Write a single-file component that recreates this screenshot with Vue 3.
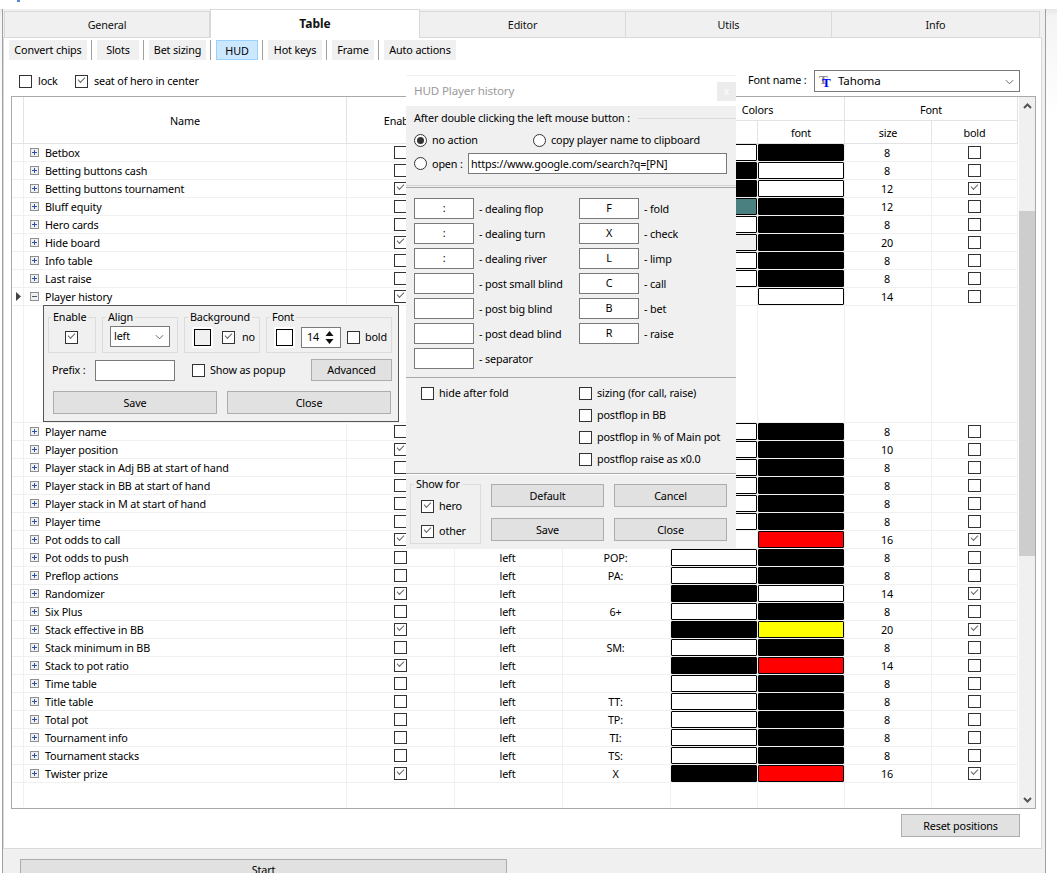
<script setup>
import { ref } from 'vue'

const tabs = [
  { name: 'General', w: 206 },
  { name: 'Table', w: 210, active: true },
  { name: 'Editor', w: 206 },
  { name: 'Utils', w: 206 },
  { name: 'Info', w: 208 }
]

const subTabs = [
  { name: 'Convert chips', w: 78 },
  { name: 'Slots', w: 42 },
  { name: 'Bet sizing', w: 57 },
  { name: 'HUD', w: 42, active: true },
  { name: 'Hot keys', w: 54 },
  { name: 'Frame', w: 42 },
  { name: 'Auto actions', w: 72 }
]

const W = '#ffffff'
const K = '#000000'
const R = '#ff0000'

// name, enable, prefix, background, font color, size, bold
const rows = ref([
  ['Betbox', 0, '', W, K, 8, 0],
  ['Betting buttons cash', 0, '', K, W, 8, 0],
  ['Betting buttons tournament', 1, '', K, W, 12, 1],
  ['Bluff equity', 0, '', '#4a8080', K, 12, 0],
  ['Hero cards', 0, '', W, K, 8, 0],
  ['Hide board', 1, '', '#f0f0f0', K, 20, 0],
  ['Info table', 0, '', W, K, 8, 0],
  ['Last raise', 0, '', W, K, 8, 0],
  ['Player history', 1, '', null, W, 14, 0],
  ['Player name', 0, '', W, K, 8, 0],
  ['Player position', 1, '', W, K, 10, 0],
  ['Player stack in Adj BB at start of hand', 0, '', W, K, 8, 0],
  ['Player stack in BB at start of hand', 0, '', W, K, 8, 0],
  ['Player stack in M at start of hand', 0, '', W, K, 8, 0],
  ['Player time', 0, '', W, K, 8, 0],
  ['Pot odds to call', 1, '', null, R, 16, 1],
  ['Pot odds to push', 0, 'POP:', W, K, 8, 0],
  ['Preflop actions', 0, 'PA:', W, K, 8, 0],
  ['Randomizer', 1, '', K, W, 14, 1],
  ['Six Plus', 0, '6+', W, K, 8, 0],
  ['Stack effective in BB', 1, '', K, '#ffff00', 20, 1],
  ['Stack minimum in BB', 0, 'SM:', W, K, 8, 0],
  ['Stack to pot ratio', 1, '', K, R, 14, 0],
  ['Time table', 0, '', W, K, 8, 0],
  ['Title table', 0, 'TT:', W, K, 8, 0],
  ['Total pot', 0, 'TP:', W, K, 8, 0],
  ['Tournament info', 0, 'TI:', W, K, 8, 0],
  ['Tournament stacks', 0, 'TS:', W, K, 8, 0],
  ['Twister prize', 1, 'X', K, R, 16, 1]
].map(r => ({ name: r[0], on: r[1], prefix: r[2], bg: r[3], fg: r[4], size: r[5], bold: r[6] })))

const leftCodes = [
  [':', 'dealing flop'],
  [':', 'dealing turn'],
  [':', 'dealing river'],
  ['', 'post small blind'],
  ['', 'post big blind'],
  ['', 'post dead blind'],
  ['', 'separator']
]
const rightCodes = [
  ['F', 'fold'],
  ['X', 'check'],
  ['L', 'limp'],
  ['C', 'call'],
  ['B', 'bet'],
  ['R', 'raise']
]
const sizing = ['sizing (for call, raise)', 'postflop in BB', 'postflop in % of Main pot', 'postflop raise as x0.0']
</script>

<template>
<div class="page">
  <div class="top-strip"><span class="top-mark"></span></div>
  <div class="frame">
    <div class="tabs">
      <div
        v-for="t in tabs"
        :key="t.name"
        class="tab"
        :class="{ 'tab-active': t.active }"
        :style="{ width: t.w + 'px' }"
      >{{ t.name }}</div>
    </div>

    <div class="pane">
      <div class="subtabs">
        <template v-for="(t, i) in subTabs" :key="t.name">
          <span v-if="i" class="subsep"></span>
          <div class="subtab" :class="{ 'subtab-active': t.active }" :style="{ width: t.w + 'px' }">{{ t.name }}</div>
        </template>
      </div>

      <div class="toolrow">
        <label class="chk lock"><span class="cb"></span>lock</label>
        <label class="chk"><span class="cb on"></span>seat of hero in center</label>
        <span class="font-label">Font name :</span>
        <div class="combo font-combo">
          <span class="tt"><i class="tt-back">T</i><i class="tt-front">T</i></span>
          <span class="font-value">Tahoma</span>
          <svg class="chev" viewBox="0 0 10 6"><path d="M1 1l4 4l4-4" fill="none" stroke="#555" stroke-width="1"/></svg>
        </div>
      </div>

      <div class="table">
        <div class="grid">
          <div class="head">
            <div class="hc hc-rowhead"></div>
            <div class="hc hc-name">Name</div>
            <div class="hc hc-enable">Enable</div>
            <div class="hc hc-align">Align</div>
            <div class="hc hc-prefix">Prefix</div>
            <div class="hc hc-colors">Colors</div>
            <div class="hc hc-bg">bg</div>
            <div class="hc hc-fg">font</div>
            <div class="hc hc-font">Font</div>
            <div class="hc hc-size">size</div>
            <div class="hc hc-bold">bold</div>
          </div>

          <template v-for="r in rows" :key="r.name">
            <div class="row">
              <div class="c c-rowhead">
                <svg v-if="r.name === 'Player history'" class="cur" viewBox="0 0 5 9"><path d="M0 0l5 4.5l-5 4.5z" fill="#444"/></svg>
              </div>
              <div class="c c-name">
                <svg class="exp" viewBox="0 0 9 9">
                  <rect x="0.5" y="0.5" width="8" height="8" fill="#eef0f4" stroke="#8f8f8f"/>
                  <path v-if="r.name === 'Player history'" d="M2 4.5h5" stroke="#555" stroke-width="1"/>
                  <path v-else d="M2 4.5h5M4.5 2v5" stroke="#2f4f9f" stroke-width="1"/>
                </svg>
                {{ r.name }}
              </div>
              <div class="c c-mid"><span class="cb" :class="{ on: r.on }"></span></div>
              <div class="c c-mid c-txt">left</div>
              <div class="c c-mid c-txt">{{ r.prefix }}</div>
              <div class="c c-sw"><span v-if="r.bg" class="swatch" :style="{ background: r.bg }"></span></div>
              <div class="c c-sw"><span class="swatch" :style="{ background: r.fg }"></span></div>
              <div class="c c-mid c-txt">{{ r.size }}</div>
              <div class="c c-mid c-last"><span class="cb" :class="{ on: r.bold }"></span></div>
            </div>

            <div v-if="r.name === 'Player history'" class="row detail">
              <div class="c c-rowhead"></div>
              <div class="c c-name"></div>
              <div class="c"></div>
              <div class="c"></div>
              <div class="c"></div>
              <div class="c"></div>
              <div class="c"></div>
              <div class="c"></div>
              <div class="c c-last"></div>

              <div class="panel">
                <div class="groups">
                  <div class="group g-enable"><span class="legend">Enable</span><span class="cb on"></span></div>
                  <div class="group g-align">
                    <span class="legend">Align</span>
                    <div class="combo align-combo">left
                      <svg class="chev" viewBox="0 0 10 6"><path d="M1 1l4 4l4-4" fill="none" stroke="#555" stroke-width="1"/></svg>
                    </div>
                  </div>
                  <div class="group g-bg">
                    <span class="legend">Background</span>
                    <span class="color-box color-none"></span>
                    <label class="chk"><span class="cb on"></span>no</label>
                  </div>
                  <div class="group g-font">
                    <span class="legend">Font</span>
                    <span class="color-box"></span>
                    <div class="spin">14
                      <svg class="spin-arrows" viewBox="0 0 9 15"><path d="M4.5 1l4 5h-8zM4.5 14l4-5h-8z" fill="#111"/></svg>
                    </div>
                    <label class="chk"><span class="cb"></span>bold</label>
                  </div>
                </div>
                <div class="panel-mid">
                  <span class="prefix-label">Prefix :</span>
                  <span class="input prefix-input"></span>
                  <label class="chk popup"><span class="cb"></span>Show as popup</label>
                  <button class="btn adv">Advanced</button>
                </div>
                <div class="panel-btns">
                  <button class="btn">Save</button>
                  <button class="btn">Close</button>
                </div>
              </div>
            </div>
          </template>

          <div class="row row-tail">
            <div class="c c-rowhead"></div>
            <div class="c c-name"></div>
            <div class="c"></div>
            <div class="c"></div>
            <div class="c"></div>
            <div class="c"></div>
            <div class="c"></div>
            <div class="c"></div>
            <div class="c c-last"></div>
          </div>
        </div>

        <div class="scroll">
          <svg class="sb-arrow" viewBox="0 0 9 6"><path d="M1 5l3.5-3.5l3.5 3.5" fill="none" stroke="#555" stroke-width="2"/></svg>
          <div class="track"><div class="thumb"></div></div>
          <svg class="sb-arrow" viewBox="0 0 9 6"><path d="M1 1l3.5 3.5l3.5-3.5" fill="none" stroke="#555" stroke-width="2"/></svg>
        </div>
      </div>

      <div class="reset-row"><button class="btn reset">Reset positions</button></div>
    </div>

    <div class="start-row"><button class="btn start">Start</button></div>
  </div>

  <!-- окно поверх таблицы -->
  <div class="dialog">
    <div class="dlg-title">
      <span>HUD Player history</span>
      <span class="dlg-close">x</span>
    </div>

    <div class="dlg-after">
      <div class="dlg-legend"><span>After double clicking the left mouse button :</span><i></i></div>
      <div class="radio-row r1">
        <label class="chk rd-a"><span class="radio on"></span>no action</label>
        <label class="chk"><span class="radio"></span>copy player name to clipboard</label>
      </div>
      <div class="radio-row r2">
        <label class="chk rd-open"><span class="radio"></span>open :</label>
        <span class="input url">https://www.google.com/search?q=[PN]</span>
      </div>
    </div>

    <div class="dlg-codes">
      <div class="code-col">
        <div v-for="c in leftCodes" :key="c[1]" class="code">
          <span class="input code-input">{{ c[0] }}</span><span>- {{ c[1] }}</span>
        </div>
      </div>
      <div class="code-col">
        <div v-for="c in rightCodes" :key="c[1]" class="code">
          <span class="input code-input">{{ c[0] }}</span><span>- {{ c[1] }}</span>
        </div>
      </div>
    </div>

    <div class="dlg-opts">
      <div class="opts-left"><label class="chk"><span class="cb"></span>hide after fold</label></div>
      <div class="opts-right">
        <label v-for="s in sizing" :key="s" class="chk"><span class="cb"></span>{{ s }}</label>
      </div>
    </div>

    <div class="dlg-foot">
      <div class="group showfor">
        <span class="legend">Show for</span>
        <label class="chk"><span class="cb on"></span>hero</label>
        <label class="chk"><span class="cb on"></span>other</label>
      </div>
      <div class="foot-btns">
        <button class="btn">Default</button>
        <button class="btn">Cancel</button>
        <button class="btn">Save</button>
        <button class="btn">Close</button>
      </div>
    </div>
  </div>
</div>
</template>

<style>
html, body {
  margin: 0;
  background: #fff;
}
</style>

<style scoped>
.page {
  position: relative;
  width: 1057px;
  height: 873px;
  overflow: hidden;
  background: linear-gradient(#fff 8px, #e6e6e6 9px, #f4f4f4 16px, #fff 120px);
  font-family: "Noto Sans", "Liberation Sans", sans-serif;
  font-size: 10.8px;
  letter-spacing: -0.15px;
  color: #000;
  line-height: 14px;
}
.top-strip {
  height: 9px;
  background: #fff;
  position: relative;
}
.top-mark {
  position: absolute;
  left: 17px;
  top: 0;
  width: 3px;
  height: 2px;
  background: #5a8ae0;
}
.frame {
  width: 1042px;
  height: 864px;
  margin-left: 2px;
  border-left: 1px solid #a0a0a0;
  border-right: 1px solid #a0a0a0;
  background: #f0f0f0;
  overflow: hidden;
}
.tabs {
  display: flex;
  align-items: flex-end;
  height: 28px;
  padding-left: 1px;
}
.tab {
  box-sizing: border-box;
  height: 26px;
  border: 1px solid #d9d9d9;
  border-left: 0;
  border-bottom: 0;
  text-align: center;
  line-height: 26px;
  color: #111;
}
.tab:first-child {
  border-left: 1px solid #d9d9d9;
}
.tab-active {
  height: 29px;
  margin-bottom: -1px;
  position: relative;
  background: #fff;
  font-weight: bold;
  font-size: 12px;
  letter-spacing: 0;
  line-height: 27px;
  border-left: 1px solid #d9d9d9;
}
.pane {
  box-sizing: border-box;
  width: 1039px;
  height: 812px;
  background: #fff;
  border: 1px solid #d9d9d9;
  display: flex;
  flex-direction: column;
}
.subtabs {
  display: flex;
  align-items: center;
  height: 20px;
  margin-top: 2px;
  padding-left: 5px;
}
.subtab {
  box-sizing: border-box;
  height: 20px;
  background: #f0f0f0;
  text-align: center;
  line-height: 19px;
}
.subtab-active {
  background: #cce8ff;
  border: 1px solid #99d1ff;
  line-height: 19px;
}
.subsep {
  width: 1px;
  height: 20px;
  margin: 0 5px 0 4px;
  background: #a0a0a0;
}
.toolrow {
  display: flex;
  align-items: center;
  height: 22px;
  margin-top: 10px;
  padding: 0 21px 0 15px;
}
.chk {
  display: inline-flex;
  align-items: center;
  gap: 6px;
  white-space: nowrap;
}
.lock {
  width: 56px;
}
.cb {
  position: relative;
  display: inline-block;
  box-sizing: border-box;
  width: 13px;
  height: 13px;
  flex: none;
  background: #fff;
  border: 1px solid #333;
}
.cb.on::after {
  content: '';
  position: absolute;
  left: 2px;
  top: 1px;
  width: 6px;
  height: 3px;
  border-left: 1.4px solid #666;
  border-bottom: 1.4px solid #666;
  transform: rotate(-45deg);
}
.font-label {
  margin-left: auto;
  width: 66px;
  margin-top: -2px;
}
.combo {
  position: relative;
  box-sizing: border-box;
  background: #fff;
  border: 1px solid #7a7a7a;
}
.font-combo {
  display: flex;
  align-items: center;
  width: 206px;
  height: 22px;
  padding-left: 4px;
  font-size: 11.6px;
}
.font-value {
  margin-left: 6px;
}
.tt {
  position: relative;
  display: inline-block;
  width: 13px;
  height: 14px;
  font-family: "Liberation Serif", serif;
  font-weight: bold;
  font-style: normal;
}
.tt i {
  position: absolute;
  font-style: normal;
  font-size: 13px;
  line-height: 13px;
}
.tt-back {
  left: 0;
  top: -1px;
  color: #8a8a8a;
}
.tt-front {
  left: 3px;
  top: 2px;
  color: #0000ff;
}
.chev {
  position: absolute;
  right: 5px;
  top: 8px;
  width: 9px;
  height: 6px;
}
.table {
  display: flex;
  box-sizing: border-box;
  width: 1025px;
  height: 713px;
  margin: 4px 0 0 7px;
  border: 1px solid #a9a9a9;
  overflow: hidden;
}
.grid {
  width: 1006px;
  flex: none;
  display: flex;
  flex-direction: column;
}
.head {
  display: grid;
  grid-template-columns: 12px 323px 108px 108px 108px 87px 87px 87px 86px;
  grid-template-rows: 24px 23px;
  height: 47px;
  flex: none;
}
.hc {
  box-sizing: border-box;
  display: flex;
  align-items: center;
  justify-content: center;
  padding-top: 2px;
  border-right: 1px solid #e3e3e3;
  border-bottom: 1px solid #e3e3e3;
}
.hc-rowhead { grid-row: 1 / 3; }
.hc-name { grid-row: 1 / 3; }
.hc-enable { grid-row: 1 / 3; }
.hc-align { grid-row: 1 / 3; }
.hc-prefix { grid-row: 1 / 3; }
.hc-colors { grid-column: 6 / 8; grid-row: 1; }
.hc-font { grid-column: 8 / 10; grid-row: 1; }
.hc-bg { grid-column: 6; grid-row: 2; }
.hc-fg { grid-column: 7; grid-row: 2; }
.hc-size { grid-column: 8; grid-row: 2; }
.hc-bold { grid-column: 9; grid-row: 2; }

.row {
  display: grid;
  grid-template-columns: 12px 323px 108px 108px 108px 87px 87px 87px 86px;
  height: 18px;
  flex: none;
}
.c {
  box-sizing: border-box;
  border-right: 1px solid #f0f0f0;
  border-bottom: 1px solid #f0f0f0;
  min-width: 0;
}
.c-rowhead {
  display: flex;
  align-items: center;
  padding-left: 4px;
}
.cur {
  width: 5px;
  height: 9px;
}
.c-name {
  display: flex;
  align-items: center;
  padding-left: 6px;
  gap: 6px;
  white-space: nowrap;
}
.exp {
  width: 9px;
  height: 9px;
  flex: none;
}
.c-mid {
  display: flex;
  align-items: center;
  justify-content: center;
}
.c-txt {
  padding-right: 2px;
}
.c-sw {
  display: flex;
  padding: 0;
}
.swatch {
  box-sizing: border-box;
  display: block;
  width: 86px;
  height: 17px;
  border: 1px solid #000;
  border-radius: 1px;
}
.detail {
  position: relative;
  height: 117px;
}
.row-tail {
  height: 24px;
}
.row-tail .c {
  border-bottom: 0;
}
.panel {
  position: absolute;
  left: 31px;
  top: -1px;
  box-sizing: border-box;
  width: 356px;
  height: 117px;
  background: #f0f0f0;
  border: 1px solid #555;
  padding: 11px 4px 0;
}
.groups {
  display: flex;
  gap: 6px;
  height: 36px;
}
.group {
  position: relative;
  box-sizing: border-box;
  display: flex;
  align-items: center;
  height: 36px;
  border: 1px solid #dcdcdc;
}
.legend {
  position: absolute;
  left: 3px;
  top: -8px;
  padding: 0 2px;
  background: #f0f0f0;
  white-space: nowrap;
}
.g-enable {
  width: 48px;
  justify-content: center;
  padding-top: 4px;
}
.g-enable .legend {
  left: 2px;
}
.g-enable .cb {
  margin-left: -1px;
}
.g-align {
  width: 76px;
  padding-left: 7px;
}
.align-combo {
  box-sizing: border-box;
  width: 60px;
  height: 21px;
  margin-top: 2px;
  padding-left: 3px;
  line-height: 17px;
}
.align-combo .chev {
  top: 7px;
}
.g-bg {
  width: 76px;
  padding: 4px 0 0 9px;
}
.g-bg .chk {
  margin-left: 11px;
  gap: 7px;
}
.g-font {
  width: 126px;
  padding: 4px 0 0 9px;
}
.color-box {
  box-sizing: border-box;
  width: 17px;
  height: 17px;
  flex: none;
  background: #fff;
  border: 1px solid #000;
  box-shadow: 0 0 0 2px #fff;
}
.color-none {
  background: #f0f0f0;
}
.spin {
  position: relative;
  box-sizing: border-box;
  width: 40px;
  height: 21px;
  margin: 0 6px 0 8px;
  padding-left: 5px;
  background: #fff;
  border: 1px solid #7a7a7a;
  line-height: 17px;
}
.spin-arrows {
  position: absolute;
  right: 6px;
  top: 2px;
  width: 9px;
  height: 15px;
}
.g-font .chk {
  gap: 5px;
}
.panel-mid {
  display: flex;
  align-items: center;
  height: 22px;
  margin-top: 6px;
}
.prefix-label {
  margin-left: 4px;
  width: 43px;
}
.input {
  box-sizing: border-box;
  display: block;
  background: #fff;
  border: 1px solid #7a7a7a;
}
.prefix-input {
  width: 80px;
  height: 21px;
}
.popup {
  margin-left: 17px;
  gap: 5px;
}
.btn {
  box-sizing: border-box;
  font: inherit;
  letter-spacing: inherit;
  color: #000;
  background: #e1e1e1;
  border: 1px solid #adadad;
  padding: 0;
}
.adv {
  width: 81px;
  height: 22px;
  margin-left: auto;
  margin-right: 2px;
}
.panel-btns {
  display: flex;
  gap: 10px;
  margin: 10px 0 0 5px;
}
.panel-btns .btn {
  width: 164px;
  height: 23px;
}
.scroll {
  flex: 1;
  display: flex;
  flex-direction: column;
  align-items: stretch;
  margin-left: 1px;
  background: #f0f0f0;
}
.sb-arrow {
  width: 9px;
  height: 6px;
  margin: 6px auto 5px;
  flex: none;
}
.track {
  flex: 1;
  padding-top: 97px;
}
.thumb {
  height: 345px;
  background: #cdcdcd;
}
.reset-row {
  display: flex;
  justify-content: flex-end;
  padding: 5px 21px 0 0;
}
.reset {
  width: 119px;
  height: 23px;
}
.start-row {
  padding: 10px 0 0 17px;
}
.start {
  display: block;
  width: 487px;
  height: 30px;
  line-height: 20px;
  padding-bottom: 11px;
}

.dialog {
  position: absolute;
  left: 406px;
  top: 75px;
  width: 330px;
  height: 473px;
  background: #f0f0f0;
  display: flex;
  flex-direction: column;
}
.dlg-title {
  display: flex;
  align-items: center;
  justify-content: space-between;
  box-sizing: border-box;
  height: 31px;
  padding: 0 0 0 8px;
  background: #fff;
  border-top: 1px solid #f0f0f0;
  color: #9a9a9a;
  font-size: 11.6px;
}
.dlg-close {
  width: 19px;
  height: 19px;
  margin-top: 1px;
  background: #ececec;
  color: #fff;
  font-size: 10px;
  line-height: 18px;
  text-align: center;
}
.dlg-after {
  box-sizing: border-box;
  height: 80px;
  padding: 5px 0 0 8px;
  border-bottom: 1px solid #d4d4d4;
}
.dlg-legend {
  display: flex;
  align-items: center;
  gap: 8px;
}
.dlg-legend i {
  flex: 1;
  height: 1px;
  background: #dcdcdc;
}
.radio-row {
  display: flex;
  align-items: center;
}
.r1 {
  margin-top: 8px;
  height: 14px;
}
.r2 {
  margin-top: 6px;
  height: 21px;
}
.rd-a {
  width: 119px;
}
.rd-open {
  width: 54px;
}
.radio-row .chk {
  gap: 5px;
}
.radio {
  position: relative;
  box-sizing: border-box;
  display: inline-block;
  width: 13px;
  height: 13px;
  flex: none;
  border-radius: 50%;
  background: #fff;
  border: 1px solid #333;
}
.radio.on::after {
  content: '';
  position: absolute;
  left: 2px;
  top: 2px;
  width: 7px;
  height: 7px;
  border-radius: 50%;
  background: #333;
}
.url {
  width: 259px;
  height: 21px;
  padding-left: 2px;
  line-height: 19px;
  white-space: nowrap;
}
.dlg-codes {
  box-sizing: border-box;
  display: flex;
  height: 191px;
  margin-top: 1px;
  padding: 10px 0 0 8px;
  border-top: 1px solid #a8a8a8;
  border-bottom: 1px solid #a8a8a8;
}
.code-col {
  width: 165px;
  flex: none;
  display: flex;
  flex-direction: column;
  gap: 4px;
}
.code {
  display: flex;
  align-items: center;
  gap: 5px;
  height: 21px;
  white-space: nowrap;
}
.code-input {
  width: 60px;
  height: 21px;
  text-align: center;
  line-height: 18px;
}
.dlg-opts {
  box-sizing: border-box;
  display: flex;
  height: 96px;
  padding-top: 8px;
  border-bottom: 1px solid #a8a8a8;
}
.opts-left {
  width: 173px;
  padding-left: 15px;
  box-sizing: border-box;
}
.opts-right {
  display: flex;
  flex-direction: column;
  gap: 8px;
}
.dlg-opts .chk {
  height: 14px;
  gap: 5px;
}
.dlg-foot {
  display: flex;
  flex: 1;
  padding: 9px 0 0 4px;
  border-top: 1px solid #fff;
}
.showfor {
  width: 71px;
  height: 60px;
  flex-direction: column;
  align-items: flex-start;
  padding: 14px 0 0 10px;
  gap: 11px;
}
.showfor .legend {
  left: 3px;
}
.showfor .chk {
  gap: 5px;
  height: 14px;
}
.foot-btns {
  display: grid;
  grid-template-columns: 113px 113px;
  grid-auto-rows: 23px;
  gap: 11px 10px;
  margin-left: 10px;
}
</style>
